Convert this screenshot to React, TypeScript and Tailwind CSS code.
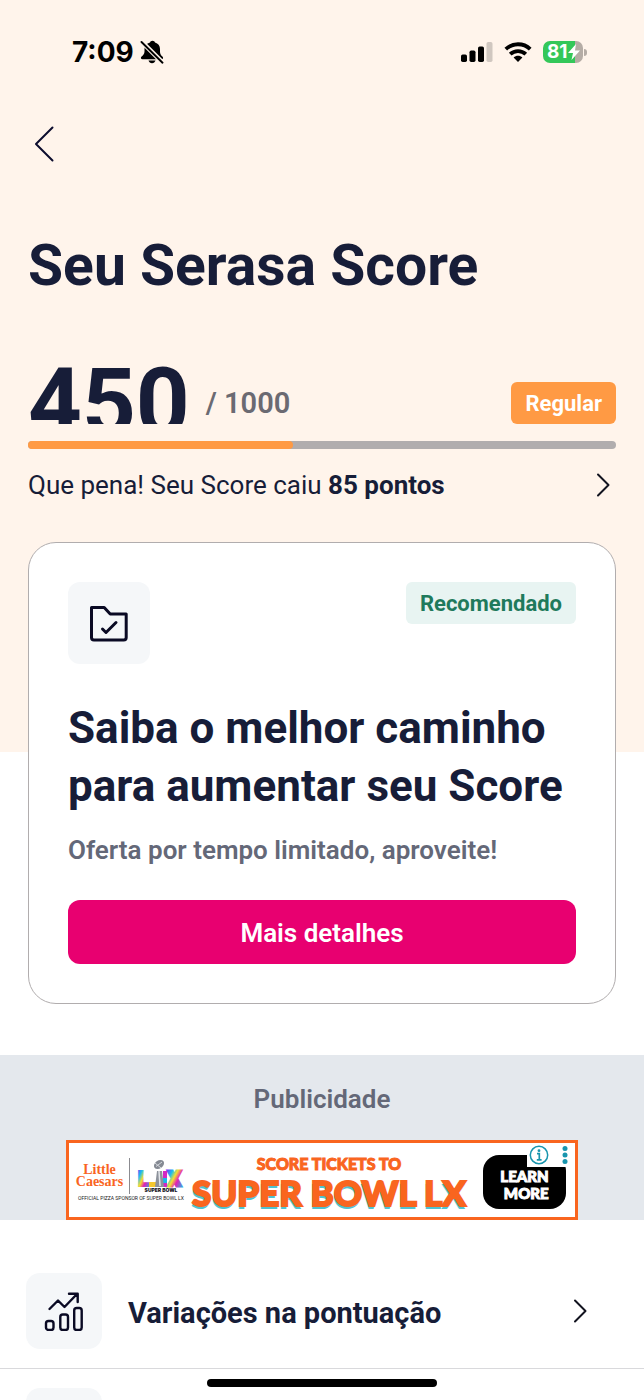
import React from "react";

interface MenuItem {
  id: string;
  label: string;
}

const menuItems: MenuItem[] = [
  { id: "variacoes", label: "Variações na pontuação" },
  { id: "historico", label: "" },
];

const BellOffIcon = () => (
  <svg className="h-6 w-6" viewBox="0 0 24 24" aria-hidden="true">
    <path
      d="M12.500.8c-1.300 0-2.200.7-2.500 1.700C6.800 3.300 4.500 5.800 4.500 9v2.500c0 2.200-1.200 3.600-2.900 5-1.200 1-.8 2.800.9 2.800h19c1.700 0 2.100-1.800.9-2.800-1.700-1.400-2.400-2.800-2.400-5V9c0-3.200-2-5.700-5-6.500-.3-1-1.200-1.700-2.500-1.700z"
      fill="#000"
    />
    <path d="M8.500 20.600h7c-.5 1.700-1.800 2.600-3.500 2.600s-3-.9-3.500-2.600z" fill="#000" />
    <path d="M1 1l22 22" stroke="#fff4eb" strokeWidth="4.600" />
    <path d="M1.500 2l21 20.700" stroke="#000" strokeWidth="1.900" strokeLinecap="round" />
  </svg>
);

const SignalIcon = () => (
  <svg className="h-5 w-8" viewBox="0 0 32 20" aria-hidden="true">
    <rect x="0" y="12.500" width="6" height="7.500" rx="1.700" fill="#000" />
    <rect x="8.500" y="8.500" width="6" height="11.500" rx="1.700" fill="#000" />
    <rect x="17" y="4.500" width="6" height="15.500" rx="1.700" fill="#000" />
    <rect x="25.500" y="0" width="6" height="20" rx="1.700" fill="#d0c7c0" />
  </svg>
);

const WifiIcon = () => (
  <svg className="h-5 w-7" viewBox="0 0 28 20" aria-hidden="true">
    <g fill="none" stroke="#000" strokeWidth="3.800">
      <path d="M1.800 7.200C8.500.600 19.500.600 26.200 7.200" />
      <path d="M6.200 12.200c4.400-4.200 11.200-4.200 15.600 0" />
    </g>
    <path d="M14 20l-4.400-4.500c2.500-2.300 6.300-2.300 8.800 0z" fill="#000" />
  </svg>
);

const BatteryIcon = () => (
  <div className="flex items-center gap-px">
    <div className="flex h-[22px] w-10 items-center overflow-hidden rounded-[7px] bg-linear-to-r from-[#34c759] from-80% to-[#b5aca5] to-80% pl-1">
      <span className="font-[Inter] text-[19px] leading-[22px] font-bold text-white">81</span>
      <svg className="h-4 w-3 shrink-0" viewBox="0 0 12 16" aria-hidden="true">
        <path d="M8 0L0 9h5l-1.500 7L12 6.500H7z" fill="#fff" />
      </svg>
    </div>
    <div className="h-[7px] w-[3px] rounded-r-full bg-[#b5aca5]" />
  </div>
);

const StatusBar = () => (
  <div className="flex h-[104px] items-center justify-between pr-[57px] pl-[72px]">
    <div className="flex items-center gap-1.5">
      <span className="font-[Inter] text-[28px] leading-8 font-bold text-black">7:09</span>
      <BellOffIcon />
    </div>
    <div className="flex items-center gap-[11px]">
      <SignalIcon />
      <WifiIcon />
      <BatteryIcon />
    </div>
  </div>
);

const Chevron = () => (
  <svg className="h-6 w-4" viewBox="0 0 16 24" fill="none" aria-hidden="true">
    <path d="M3 1.500L13.500 12 3 22.500" stroke="#12131f" strokeWidth="2" strokeLinecap="round" strokeLinejoin="round" />
  </svg>
);

const ScoreHeader = () => (
  <header className="bg-[#fff4eb] pb-[251px]">
    <StatusBar />
    <div className="px-7">
      <button type="button" aria-label="Voltar" className="flex h-20 w-8 items-center justify-center">
        <svg className="h-9 w-5" viewBox="0 0 20 36" fill="none" aria-hidden="true">
          <path d="M18.500 1.500L2 18l16.500 16.500" stroke="#0c0c2e" strokeWidth="2" strokeLinecap="round" strokeLinejoin="round" />
        </svg>
      </button>
      <h1 className="mt-[50px] text-[57px] leading-16 font-bold">Seu Serasa Score</h1>

      <div className="mt-[54px] flex items-end justify-between">
        <div className="flex items-end gap-4">
          <span className="h-[72px] overflow-hidden text-[94px] leading-[103px] font-bold">450</span>
          <span className="pb-[5px] text-[29px] leading-8 font-semibold text-[#6b6a72]">/ 1000</span>
        </div>
        <span className="rounded-md bg-[#ff9a44] px-3.5 pt-0.5 text-[22px] leading-10 font-bold text-white">
          Regular
        </span>
      </div>

      <div className="mt-[17px] h-2 overflow-hidden rounded-full bg-[#b1adae]">
        <div className="h-full w-[45%] rounded-r-sm bg-[#ff9a44]" />
      </div>

      <button type="button" className="mt-5 flex w-full items-center justify-between pr-[5px] text-left">
        <span className="text-[26px] leading-8">
          Que pena! Seu Score caiu <strong className="font-bold">85 pontos</strong>
        </span>
        <Chevron />
      </button>
    </div>
  </header>
);

const OfferCard = () => (
  <section className="mx-7 -mt-[210px] rounded-[28px] border border-[#b1adae] bg-white p-[39px]">
    <div className="flex items-start justify-between">
      <div className="flex size-[82px] items-center justify-center rounded-xl bg-[#f5f7f9]">
        <svg className="size-10" viewBox="0 0 40 40" fill="none" stroke="#0a0a24" strokeWidth="3" strokeLinecap="round" strokeLinejoin="round" aria-hidden="true">
          <path d="M2.500 4.500h12.700l6 6.500h16v23.500c0 1.500-.9 2.500-2.500 2.500H5c-1.600 0-2.500-1-2.500-2.500z" />
          <path d="M13.500 26l3.500 3.500L27 19.500" />
        </svg>
      </div>
      <span className="rounded-md bg-[#e8f4f2] px-3.5 pt-0.5 text-[22px] leading-10 font-bold text-[#1f7a5c]">
        Recomendado
      </span>
    </div>
    <h2 className="mt-[35px] text-[44px] leading-[58px] font-bold">
      Saiba o melhor caminho para aumentar seu Score
    </h2>
    <p className="mt-[19px] text-[26px] leading-8 font-semibold text-[#646878]">
      Oferta por tempo limitado, aproveite!
    </p>
    <button type="button" className="mt-[34px] h-16 w-full rounded-xl bg-[#e80070] pt-0.5 text-[26px] font-semibold text-white">
      Mais detalhes
    </button>
  </section>
);

const SuperBowlLogo = () => (
  <svg className="h-9 w-[50px]" viewBox="0 0 50 36" aria-hidden="true">
    <defs>
      <linearGradient id="lx" x1="0" y1="0" x2="1" y2="1">
        <stop offset="0" stopColor="#7b2ff0" />
        <stop offset="0.250" stopColor="#18bdf2" />
        <stop offset="0.450" stopColor="#f5df2e" />
        <stop offset="0.650" stopColor="#e31fb4" />
        <stop offset="1" stopColor="#1fb5e8" />
      </linearGradient>
    </defs>
    <text x="2" y="28" fontFamily="Roboto" fontSize="20" fontWeight="900" fill="url(#lx)" stroke="url(#lx)" strokeWidth="2">L</text>
    <text x="32" y="28" fontFamily="Roboto" fontSize="20" fontWeight="900" fill="url(#lx)" stroke="url(#lx)" strokeWidth="3">X</text>
    <path d="M13 24h7v5h-7z" fill="#f5c82e" />
    <path d="M27 13h4v16h-4z" fill="#d326c4" />
    <path d="M27 20h4v5h-4z" fill="#19b7ea" />
    <path d="M19 29l2-16h5l2 16z" fill="#8d929b" />
    <path d="M23 13l1 15" stroke="#e3e6ea" strokeWidth="1.500" />
    <ellipse cx="23" cy="6.500" rx="5.500" ry="4" transform="rotate(-35 23 6.500)" fill="#858a93" />
    <path d="M20 8.500l6-4.500M19 5l6 5" stroke="#d8dbe0" strokeWidth="1" />
    <text x="25" y="34" textAnchor="middle" fontFamily="Inter" fontSize="5" fontWeight="900" fill="#17171f">SUPER BOWL</text>
  </svg>
);

const AdBanner = () => (
  <section className="mt-[51px] bg-[#e4e8ed] pt-7">
    <p className="text-center text-[26px] leading-8 font-semibold text-[#646878]">Publicidade</p>
    <a
      href="#anuncio"
      className="relative mx-auto mt-[25px] flex h-20 w-[512px] items-center border-3 border-[#f9651f] bg-white pl-2"
    >
      <div className="flex w-[108px] flex-col items-center">
        <div className="flex items-center gap-1.5">
          <div className="text-center font-[Liberation_Serif] text-[14px] leading-3 font-bold text-[#f9651f]">
            Little
            <br />
            Caesars
          </div>
          <div className="h-9 w-px bg-[#8b8b90]" />
          <SuperBowlLogo />
        </div>
        <span className="text-[5px] leading-2 whitespace-nowrap text-[#222]">
          OFFICIAL PIZZA SPONSOR OF SUPER BOWL LX
        </span>
      </div>
      <div className="ml-1 w-[280px] pt-1 text-center font-[Lato] font-black whitespace-nowrap text-[#f9651f]">
        <div className="text-[16px] leading-5 [-webkit-text-stroke:1px_#f9651f]">SCORE TICKETS TO</div>
        <div className="text-[35px] leading-9 [-webkit-text-stroke:2px_#f9651f] [text-shadow:-1px_3px_0_#4fc3d0]">
          SUPER BOWL LX
        </div>
      </div>
      <div className="mt-1 ml-3.5 flex h-[54px] w-[83px] items-center justify-center rounded-2xl bg-black pt-1.5 text-right font-[Lato] text-[15px] leading-[17px] font-black text-white [-webkit-text-stroke:1px_#fff]">
        LEARN
        <br />
        MORE
      </div>
      <div className="absolute top-0 right-0 flex h-6 w-12 items-center gap-3 bg-white pl-0.5">
        <svg className="size-5" viewBox="0 0 20 20" fill="none" aria-hidden="true">
          <circle cx="10" cy="10" r="8.700" stroke="#1895ae" strokeWidth="1.500" />
          <circle cx="10" cy="5.700" r="1.400" fill="#1895ae" />
          <path d="M8 8.600h2.300v6M7.800 14.800h4.800" stroke="#1895ae" strokeWidth="1.700" />
        </svg>
        <svg className="h-5 w-2" viewBox="0 0 8 20" fill="#1895ae" aria-hidden="true">
          <circle cx="4" cy="3.500" r="2.500" />
          <circle cx="4" cy="10" r="2.500" />
          <circle cx="4" cy="16.500" r="2.500" />
        </svg>
      </div>
    </a>
  </section>
);

const ChartIcon = () => (
  <svg className="size-10" viewBox="0 0 40 40" fill="none" stroke="#0a0a24" strokeWidth="2.400" strokeLinecap="round" strokeLinejoin="round" aria-hidden="true">
    <rect x="2" y="30" width="7.500" height="9" rx="2.500" />
    <rect x="16.300" y="23.500" width="7.700" height="15.500" rx="2.500" />
    <rect x="30.200" y="17" width="7.500" height="22" rx="2.500" />
    <path d="M5.500 18l8.500-8.500 6.500 6.500L33 3M25 2.800h8.700V11" />
  </svg>
);

const ScoreMenu = () => (
  <nav className="pt-[34px]">
    {menuItems.map((item) => (
      <button
        key={item.id}
        type="button"
        className="flex w-full items-center border-b border-[#d9d9dc] py-[19px] pr-14 pl-[26px] text-left"
      >
        <span className="flex size-[76px] items-center justify-center rounded-[14px] bg-[#f5f7f9]">
          {item.label && <ChartIcon />}
        </span>
        <span className="ml-[26px] flex-1 pt-[3px] text-[29px] leading-8 font-bold">{item.label}</span>
        <Chevron />
      </button>
    ))}
  </nav>
);

const App: React.FC = () => {
  return (
    <div className="relative h-screen overflow-hidden bg-white font-[Roboto,sans-serif] text-[#171d38]">
      <ScoreHeader />
      <OfferCard />
      <AdBanner />
      <ScoreMenu />
      {/* Home indicator */}
      <div className="absolute inset-x-0 bottom-[13px] mx-auto h-2 w-[230px] rounded-full bg-black" />
    </div>
  );
};

export default App;
